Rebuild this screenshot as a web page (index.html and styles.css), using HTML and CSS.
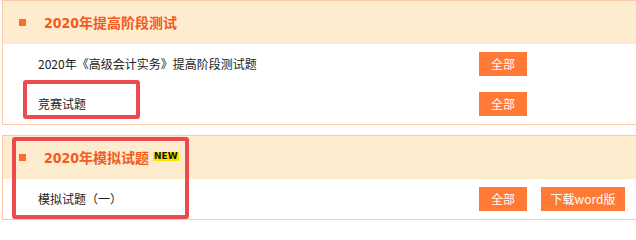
FILE: index.html
```html
<!DOCTYPE html>
<html lang="zh-CN">
<head>
<meta charset="utf-8">
<link rel="stylesheet" href="styles.css">
</head>
<body>
<div class="page">
  <section class="block">
    <div class="block-head">
      <span class="bullet"></span>
      <h2 class="title">2020年提高阶段测试</h2>
    </div>
    <div class="row">
      <span class="row-text">2020年《高级会计实务》提高阶段测试题</span>
      <a class="btn">全部</a>
    </div>
    <div class="row">
      <span class="row-text">竞赛试题</span>
      <a class="btn">全部</a>
    </div>
  </section>
  <section class="block">
    <div class="block-head">
      <span class="bullet"></span>
      <h2 class="title">2020年模拟试题</h2>
      <span class="new">NEW</span>
    </div>
    <div class="row">
      <span class="row-text">模拟试题（一）</span>
      <a class="btn">全部</a>
      <a class="btn btn-wide">下载word版</a>
    </div>
  </section>
  <div class="mark mark-a"></div>
  <div class="mark mark-b"></div>
</div>
</body>
</html>
```
FILE: styles.css
```css
html, body {
  margin: 0;
  padding: 0;
  background: #fff;
  overflow: hidden;
}
body {
  font-family: "Noto Sans CJK SC", "Liberation Sans", sans-serif;
  color: #222;
}
.page {
  position: relative;
  width: 636px;
  height: 226px;
  padding-left: 2px;
  box-sizing: border-box;
  overflow: hidden;
}
.block {
  border: 1px solid #fcc9a6;
  border-right: none;
  margin-bottom: 10px;
}
.block-head {
  height: 43px;
  background: #feecce;
  display: flex;
  align-items: center;
}
.bullet {
  width: 7px;
  height: 7px;
  background: #fe6a36;
  margin-left: 16px;
  flex: none;
}
.title {
  margin: 0 0 0 18px;
  font-family: "DejaVu Sans Condensed", "Noto Sans CJK SC", sans-serif;
  font-size: 14px;
  font-weight: bold;
  color: #f35a20;
  line-height: 1;
}
.new {
  margin-left: 4px;
  margin-top: -2px;
  font-family: "DejaVu Sans", sans-serif;
  font-size: 9px;
  font-weight: bold;
  line-height: 9px;
  padding: 0 1px;
  background: #ffe100;
  color: #111;
}
.row {
  height: 40px;
  display: flex;
  align-items: center;
}
.row-text {
  width: 441px;
  padding-left: 35px;
  font-size: 12px;
  line-height: 1;
  color: #222;
  flex: none;
}
.btn {
  width: 48px;
  height: 24px;
  background: #ff7a37;
  color: #fff;
  font-size: 12px;
  line-height: 24px;
  text-align: center;
  flex: none;
}
.btn-wide {
  width: 84px;
  margin-left: 14px;
}
.mark {
  position: absolute;
  border: 4px solid #eb4a4e;
  border-radius: 3px;
  box-sizing: border-box;
}
.mark-a {
  left: 23px;
  top: 80px;
  width: 117px;
  height: 39px;
}
.mark-b {
  left: 12px;
  top: 137px;
  width: 177px;
  height: 82px;
}
```
